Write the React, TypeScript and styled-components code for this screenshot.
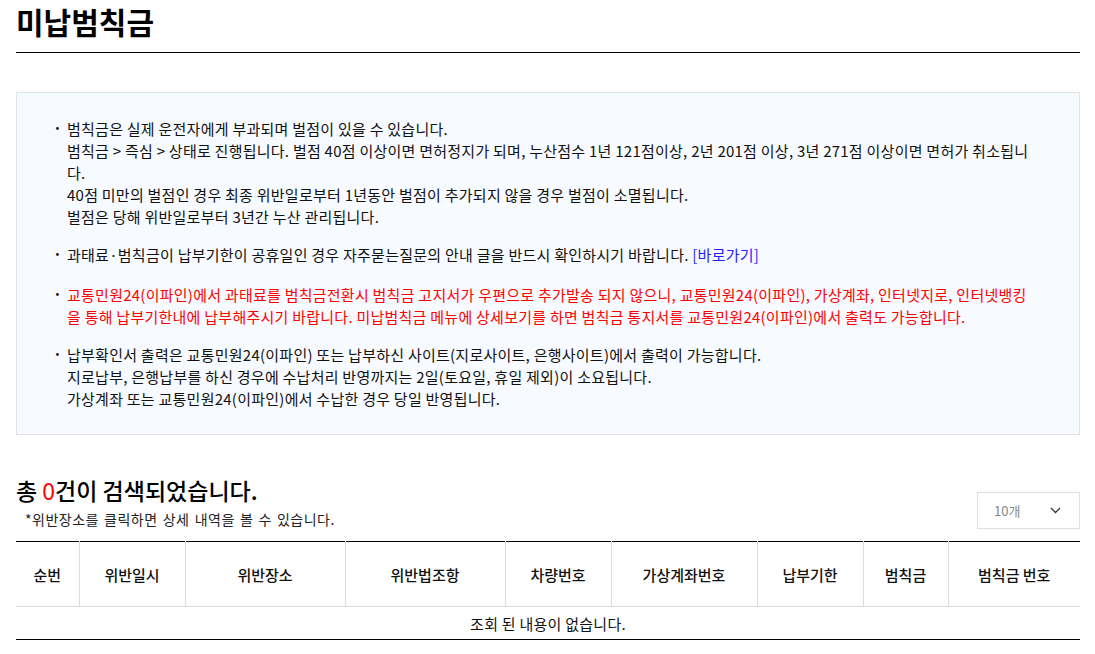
import React from "react";
import styled, { createGlobalStyle } from "styled-components";

const GlobalStyle = createGlobalStyle`
  html, body { margin: 0; padding: 0; background: #fff; }
  body {
    font-family: "Noto Sans CJK KR", "Noto Sans", sans-serif;
    color: #111;
  }
  * { box-sizing: border-box; }
`;

const Page = styled.div`
  margin: 0 15px 0 16px;
`;

const Title = styled.h1`
  margin: 0;
  padding-bottom: 10px;
  font-size: 30px;
  line-height: 42px;
  font-weight: 700;
  color: #000;
  border-bottom: 1px solid #000;
`;

const InfoBox = styled.div`
  margin-top: 39px;
  background: #f7faff;
  border: 1px solid #e1e4e8;
  padding: 25px 40px 24px 40px;
`;

const InfoList = styled.ul`
  list-style: none;
  margin: 0;
  padding: 0;
`;

const InfoItem = styled.li<{ $red?: boolean; $gap?: number }>`
  position: relative;
  padding-left: 10px;
  margin-top: ${(p) => p.$gap ?? 0}px;
  font-size: 15px;
  line-height: 22px;
  letter-spacing: 0.25px;
  white-space: nowrap;
  color: ${(p) => (p.$red ? "#ff0000" : "#111")};
  &::before {
    content: "·";
    position: absolute;
    left: -4px;
    top: -1px;
    font-weight: 700;
    color: #111;
  }
`;

const Link = styled.a`
  color: #1e1eff;
  text-decoration: none;
`;

const ResultHeader = styled.div`
  display: flex;
  justify-content: space-between;
  align-items: flex-end;
  margin-top: 40px;
  margin-bottom: 13px;
`;

const ResultTitleGroup = styled.div`
  display: flex;
  flex-direction: column;
`;

const ResultTitle = styled.h2`
  margin: 0;
  font-size: 23px;
  line-height: 30px;
  font-weight: 500;
  color: #000;
`;

const Count = styled.span`
  color: #ff0000;
  font-weight: 400;
`;

const Hint = styled.p`
  margin: 5px 0 0;
  padding-left: 9px;
  font-size: 14px;
  line-height: 18px;
  letter-spacing: 0.5px;
  word-spacing: 1.5px;
  color: #222;
`;

const Select = styled.div`
  width: 103px;
  height: 37px;
  margin-bottom: -1px;
  border: 1px solid #e0e0e0;
  display: flex;
  align-items: center;
  justify-content: space-between;
  padding: 0 18px 0 16px;
  font-size: 13px;
  color: #888;
  background: #fff;
`;

const Table = styled.table`
  width: 100%;
  border-collapse: collapse;
  table-layout: fixed;
  border-top: 1px solid #000;
  border-bottom: 1px solid #000;
`;

const Th = styled.th`
  height: 65px;
  font-size: 15px;
  font-weight: 500;
  color: #111;
  text-align: center;
  border-bottom: 1px solid #dcdcdc;
  border-left: 1px solid #dcdcdc;
  padding: 0;
  &:first-child { border-left: none; }
`;

const Td = styled.td`
  height: 33px;
  font-size: 15px;
  letter-spacing: 0.25px;
  text-align: center;
  color: #111;
  padding: 0;
`;

const Chevron = () => (
  <svg width="11" height="7" viewBox="0 0 11 7" fill="none">
    <path d="M1 1l4.5 4.5L10 1" stroke="#333" strokeWidth="1.3" />
  </svg>
);

const columns: [string, number][] = [
  ["순번", 63],
  ["위반일시", 106],
  ["위반장소", 160],
  ["위반법조항", 160],
  ["차량번호", 106],
  ["가상계좌번호", 146],
  ["납부기한", 106],
  ["범칙금", 85],
  ["범칙금 번호", 132],
];

export default function App() {
  return (
    <>
      <GlobalStyle />
      <Page>
        <Title>미납범칙금</Title>
        <InfoBox>
          <InfoList>
            <InfoItem>
              범칙금은 실제 운전자에게 부과되며 벌점이 있을 수 있습니다.
              <br />
              범칙금 &gt; 즉심 &gt; 상태로 진행됩니다. 벌점 40점 이상이면 면허정지가 되며, 누산점수 1년 121점이상, 2년 201점 이상, 3년 271점 이상이면 면허가 취소됩니
              <br />
              다.
              <br />
              40점 미만의 벌점인 경우 최종 위반일로부터 1년동안 벌점이 추가되지 않을 경우 벌점이 소멸됩니다.
              <br />
              벌점은 당해 위반일로부터 3년간 누산 관리됩니다.
            </InfoItem>
            <InfoItem $gap={16}>
              과태료·범칙금이 납부기한이 공휴일인 경우 자주묻는질문의 안내 글을 반드시 확인하시기 바랍니다.{" "}
              <Link href="#">[바로가기]</Link>
            </InfoItem>
            <InfoItem $red $gap={18}>
              교통민원24(이파인)에서 과태료를 범칙금전환시 범칙금 고지서가 우편으로 추가발송 되지 않으니, 교통민원24(이파인), 가상계좌, 인터넷지로, 인터넷뱅킹
              <br />
              을 통해 납부기한내에 납부해주시기 바랍니다. 미납범칙금 메뉴에 상세보기를 하면 범칙금 통지서를 교통민원24(이파인)에서 출력도 가능합니다.
            </InfoItem>
            <InfoItem $gap={16}>
              납부확인서 출력은 교통민원24(이파인) 또는 납부하신 사이트(지로사이트, 은행사이트)에서 출력이 가능합니다.
              <br />
              지로납부, 은행납부를 하신 경우에 수납처리 반영까지는 2일(토요일, 휴일 제외)이 소요됩니다.
              <br />
              가상계좌 또는 교통민원24(이파인)에서 수납한 경우 당일 반영됩니다.
            </InfoItem>
          </InfoList>
        </InfoBox>

        <ResultHeader>
          <ResultTitleGroup>
            <ResultTitle>
              총 <Count>0</Count>건이 검색되었습니다.
            </ResultTitle>
            <Hint>*위반장소를 클릭하면 상세 내역을 볼 수 있습니다.</Hint>
          </ResultTitleGroup>
          <Select>
            <span>10개</span>
            <Chevron />
          </Select>
        </ResultHeader>

        <Table>
          <colgroup>
            {columns.map(([name, w]) => (
              <col key={name} style={{ width: w }} />
            ))}
          </colgroup>
          <thead>
            <tr>
              {columns.map(([name]) => (
                <Th key={name}>{name}</Th>
              ))}
            </tr>
          </thead>
          <tbody>
            <tr>
              <Td colSpan={columns.length}>조회 된 내용이 없습니다.</Td>
            </tr>
          </tbody>
        </Table>
      </Page>
    </>
  );
}
